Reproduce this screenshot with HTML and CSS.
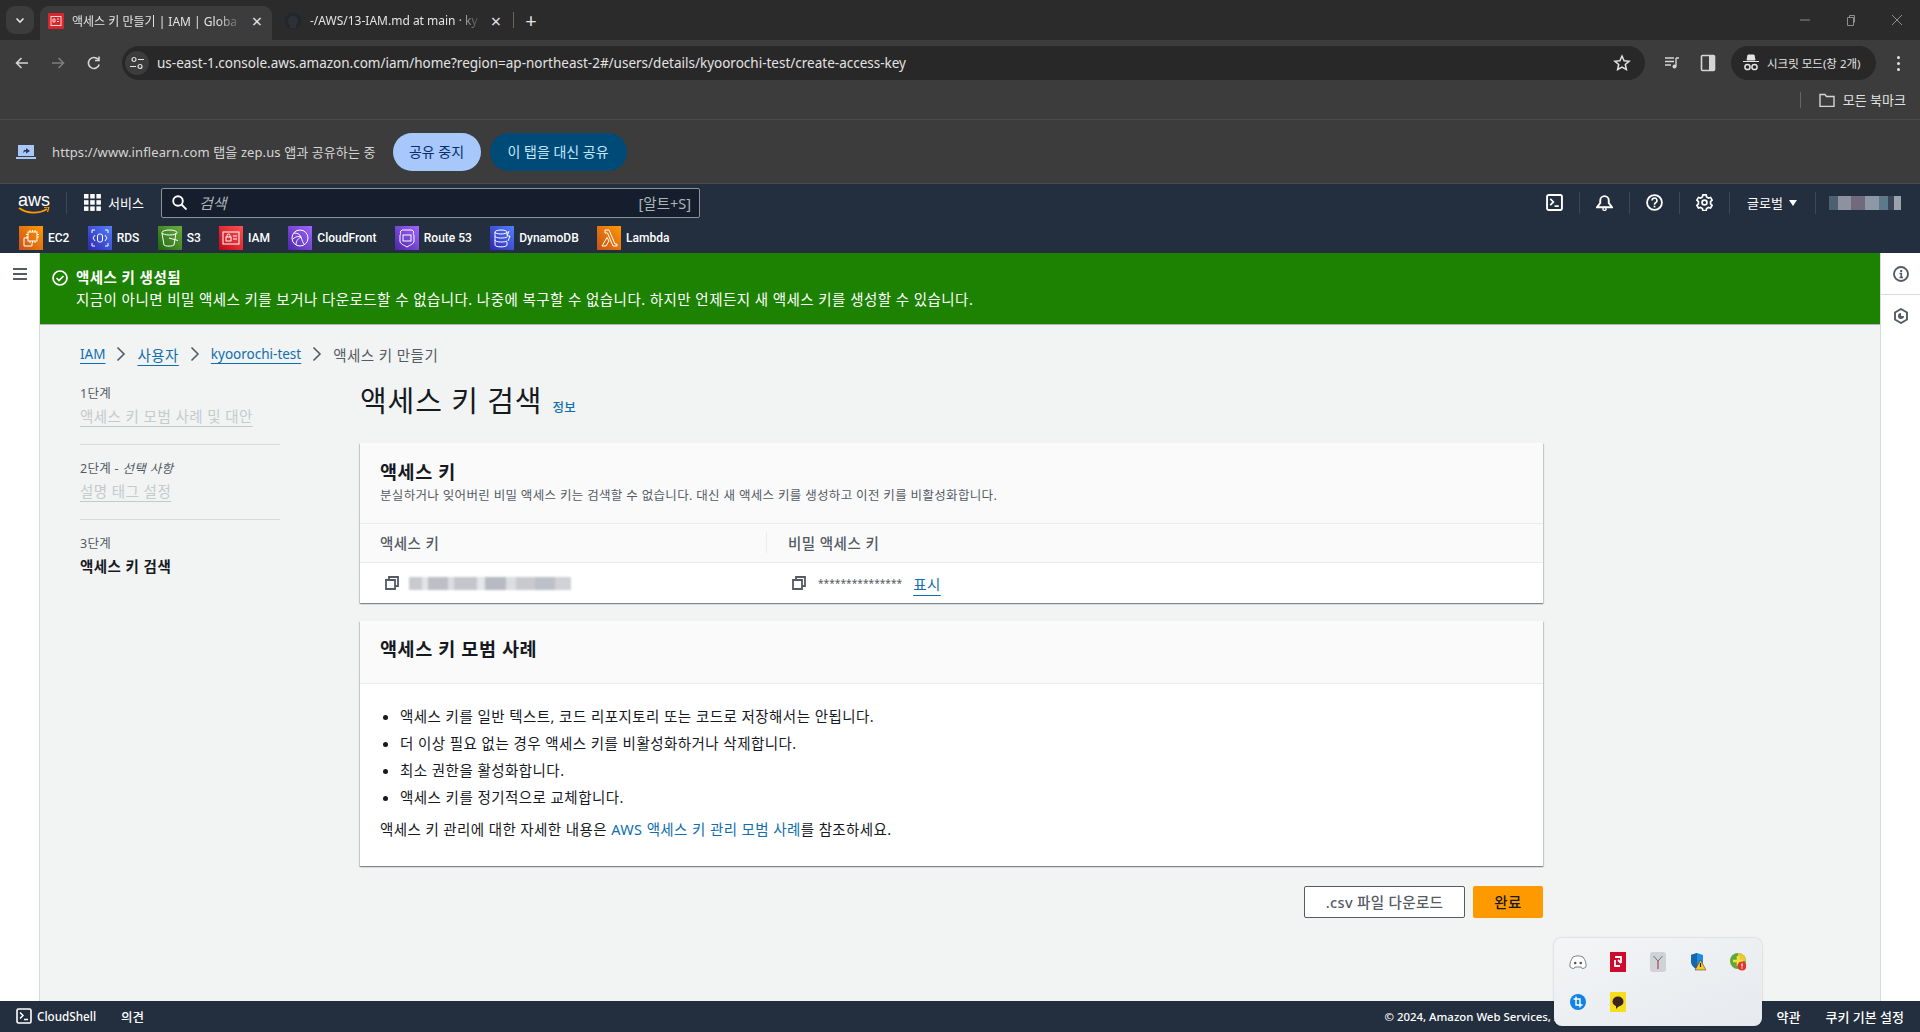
FILE: index.html
```html
<!DOCTYPE html>
<html lang="ko">
<head>
    <meta charset="UTF-8">
    <meta name="viewport" content="width=device-width, initial-scale=1.0">
    <title>액세스 키 만들기 | IAM | Global</title>
    <link rel="stylesheet" href="styles.css">
</head>
<body>
    <div class="browser">
        <div class="tab-strip">
            <div class="tab-search"><svg width="12" height="12" viewBox="0 0 12 12"><path d="M2.500 4.500 6 8l3.500-3.500" fill="none" stroke="#e3e3e3" stroke-width="1.600"/></svg></div>
            <div class="tab tab-active">
                <svg class="favicon" width="16" height="16" viewBox="0 0 16 16"><rect width="16" height="16" rx="1" fill="#d6262d"/><rect x="3" y="3.500" width="10" height="9" fill="none" stroke="#f8d5d5"/><path d="M5 6h2v3H5zM9 6h2M9 8.500h2" fill="none" stroke="#f8d5d5"/></svg>
                <span class="tab-title">액세스 키 만들기 | IAM | Globa</span>
                <span class="tab-close">×</span>
            </div>
            <div class="tab tab-other">
                <svg class="favicon" width="18" height="18" viewBox="0 0 18 18"><circle cx="9" cy="9" r="8.500" fill="#23272c"/><path d="M6 16v-3c-1-1-2-2-2-4 0-3 2-5 5-5s5 2 5 5c0 2-1 3-2 4v3" fill="#2d3137"/></svg>
                <span class="tab-title">-/AWS/13-IAM.md at main · ky</span>
                <span class="tab-close">×</span>
            </div>
            <div class="tab-sep"></div>
            <div class="tab-new">+</div>
            <div class="window-btns">
                <svg width="12" height="12" viewBox="0 0 12 12"><path d="M1 6h10" stroke="#8d8d8d"/></svg>
                <svg width="12" height="12" viewBox="0 0 12 12"><path d="M2.500 3.500h6v8h-6zM4.500 3.500v-2h5v7" fill="none" stroke="#8d8d8d"/></svg>
                <svg width="12" height="12" viewBox="0 0 12 12"><path d="m1 1 10 10M11 1 1 11" stroke="#8d8d8d"/></svg>
            </div>
        </div>
        <div class="toolbar">
            <div class="tool-btn"><svg width="16" height="16" viewBox="0 0 16 16"><path d="M14 8H3M7.500 3 2.500 8l5 5" fill="none" stroke="#d5d5d5" stroke-width="1.600"/></svg></div>
            <div class="tool-btn"><svg width="16" height="16" viewBox="0 0 16 16"><path d="M2 8h11M8.500 3l5 5-5 5" fill="none" stroke="#7d7d7d" stroke-width="1.600"/></svg></div>
            <div class="tool-btn"><svg width="16" height="16" viewBox="0 0 16 16"><path d="M13.200 9.500A5.500 5.500 0 1 1 12 4.300M13 1.500V5.500H9" fill="none" stroke="#d5d5d5" stroke-width="1.600"/></svg></div>
            <div class="omnibox">
                <div class="site-info"><svg width="14" height="14" viewBox="0 0 14 14"><circle cx="4" cy="3.500" r="2" fill="none" stroke="#e3e3e3" stroke-width="1.200"/><path d="M8 3.500h6M0 10.500h6" stroke="#e3e3e3" stroke-width="1.200"/><circle cx="10" cy="10.500" r="2" fill="none" stroke="#e3e3e3" stroke-width="1.200"/></svg></div>
                <span class="url">us-east-1.console.aws.amazon.com/iam/home?region=ap-northeast-2#/users/details/kyoorochi-test/create-access-key</span>
                <svg class="star" width="18" height="18" viewBox="0 0 18 18"><path d="m9 2 2.100 4.700 5 .5-3.800 3.300 1.100 5L9 13l-4.400 2.500 1.100-5L1.900 7.200l5-.5z" fill="none" stroke="#e3e3e3" stroke-width="1.500"/></svg>
            </div>
            <div class="tool-btn"><svg width="16" height="16" viewBox="0 0 16 16"><path d="M1 3h9M1 6.500h9M1 10h6" stroke="#d5d5d5" stroke-width="1.400"/><path d="M12 3h3M12 3v8" stroke="#d5d5d5" stroke-width="1.400" fill="none"/><circle cx="10.500" cy="11.500" r="2" fill="#d5d5d5"/></svg></div>
            <div class="tool-btn"><svg width="16" height="18" viewBox="0 0 16 18"><rect x="1.500" y="1.500" width="13" height="15" rx="1" fill="none" stroke="#d5d5d5" stroke-width="1.600"/><rect x="9" y="2" width="5" height="14" fill="#d5d5d5"/></svg></div>
            <div class="incognito">
                <svg width="16" height="18" viewBox="0 0 16 18"><path d="M5 1h6l1 5H4zM0 7.500h16" fill="#e3e3e3" stroke="#e3e3e3"/><circle cx="4.500" cy="13" r="2.600" fill="none" stroke="#e3e3e3" stroke-width="1.500"/><circle cx="11.500" cy="13" r="2.600" fill="none" stroke="#e3e3e3" stroke-width="1.500"/></svg>
                <span>시크릿 모드(창 2개)</span>
            </div>
            <div class="menu-dots"><i></i><i></i><i></i></div>
        </div>
        <div class="bookmarks">
            <div class="bm-sep"></div>
            <svg width="16" height="14" viewBox="0 0 16 14"><path d="M1 1.500h5l1.500 2H15v10H1z" fill="none" stroke="#d5d5d5" stroke-width="1.400"/></svg>
            <span>모든 북마크</span>
        </div>
        <div class="infobar">
            <svg width="20" height="14" viewBox="0 0 20 14"><path d="M2 0h16v11H2z" fill="#a8c7fa"/><path d="M0 12h20v2H0z" fill="#a8c7fa"/><path d="m7 8 1-3h2V3l4 3-4 2.500V6.500H9z" fill="#2b3a55"/></svg>
            <span class="info-text">https://www.inflearn.com 탭을 zep.us 앱과 공유하는 중</span>
            <div class="btn-stop">공유 중지</div>
            <div class="btn-share">이 탭을 대신 공유</div>
        </div>
    </div>

    <header class="aws-nav">
        <div class="nav-top">
            <div class="aws-logo">
                <span>aws</span>
                <svg width="32" height="8" viewBox="0 0 32 8"><path d="M1 1c8 6 20 6 28 1" fill="none" stroke="#f90" stroke-width="1.800"/><path d="m26 .5 5-.5-1.500 5" fill="none" stroke="#f90" stroke-width="1.200"/></svg>
            </div>
            <div class="logo-sep"></div>
            <div class="services">
                <svg width="17" height="17" viewBox="0 0 17 17" fill="#fff"><rect width="4.500" height="4.500"/><rect x="6.200" width="4.500" height="4.500"/><rect x="12.400" width="4.500" height="4.500"/><rect y="6.200" width="4.500" height="4.500"/><rect x="6.200" y="6.200" width="4.500" height="4.500"/><rect x="12.400" y="6.200" width="4.500" height="4.500"/><rect y="12.400" width="4.500" height="4.500"/><rect x="6.200" y="12.400" width="4.500" height="4.500"/><rect x="12.400" y="12.400" width="4.500" height="4.500"/></svg>
                <span>서비스</span>
            </div>
            <div class="search">
                <svg width="15" height="15" viewBox="0 0 15 15"><circle cx="6" cy="6" r="4.800" fill="none" stroke="#fff" stroke-width="1.900"/><path d="m9.500 9.500 5 5" stroke="#fff" stroke-width="1.900"/></svg>
                <span class="search-ph">검색</span>
                <span class="search-key">[알트+S]</span>
            </div>
            <div class="nav-tools">
                <div class="nav-tool"><svg width="17" height="17" viewBox="0 0 16 16"><rect x="1" y="1" width="14" height="14" rx="1.500" fill="none" stroke="#fff" stroke-width="1.800"/><path d="m4 4.500 3 3-3 3M8 11.500h4" fill="none" stroke="#fff" stroke-width="1.600"/></svg></div>
                <div class="nav-tool"><svg width="17" height="17" viewBox="0 0 16 16"><path d="M1 12.500h14L12 8.500V6A4 4 0 0 0 4 6v2.500z" fill="none" stroke="#fff" stroke-width="1.800"/><circle cx="8" cy="14" r="1.500" fill="none" stroke="#fff" stroke-width="1.300"/></svg></div>
                <div class="nav-tool"><svg width="17" height="17" viewBox="0 0 16 16"><circle cx="8" cy="8" r="7" fill="none" stroke="#fff" stroke-width="1.700"/><path d="M5.700 6.200A2.300 2.300 0 1 1 9 8.200c-.7.400-1 .8-1 1.800" fill="none" stroke="#fff" stroke-width="1.500"/><rect x="7.200" y="11" width="1.600" height="1.600" fill="#fff"/></svg></div>
                <div class="nav-tool"><svg width="17" height="17" viewBox="0 0 16 16"><path d="m6.500.8h3l.5 2 1.700 1 2-.6 1.500 2.600-1.500 1.400v2l1.500 1.400-1.500 2.600-2-.6-1.700 1-.5 2h-3l-.5-2-1.700-1-2 .6L.8 10.600l1.500-1.400v-2L.8 5.800l1.500-2.600 2 .6 1.700-1z" fill="none" stroke="#fff" stroke-width="1.600"/><circle cx="8" cy="8" r="2.300" fill="none" stroke="#fff" stroke-width="1.600"/></svg></div>
                <div class="nav-region"><span>글로벌</span><i class="caret"></i></div>
                <div class="nav-account"><div class="account-blur"></div></div>
            </div>
        </div>
        <div class="favorites">
            <div class="fav">
                <svg width="24" height="24" viewBox="0 0 24 24"><rect width="24" height="24" fill="url(#g-orange)"/><g fill="none" stroke="#fff"><rect x="9" y="6" width="9" height="9"/><path d="M11 4v2M13.500 4v2M16 4v2M11 15v2M13.500 15v2M16 15v2M7 8.500h2M7 11h2M18 8.500h2M18 11h2"/><path d="M9 12H5v8h8v-3"/></g></svg>
                <span>EC2</span>
            </div>
            <div class="fav">
                <svg width="24" height="24" viewBox="0 0 24 24"><rect width="24" height="24" fill="url(#g-blue)"/><g fill="none" stroke="#fff"><rect x="9.500" y="8" width="5" height="8" rx="2"/><path d="M7 9 5 12l2 3M17 9l2 3-2 3M4 7V4h3M17 4h3v3M20 17v3h-3M7 20H4v-3"/></g></svg>
                <span>RDS</span>
            </div>
            <div class="fav">
                <svg width="24" height="24" viewBox="0 0 24 24"><rect width="24" height="24" fill="url(#g-green)"/><g fill="none" stroke="#fff"><ellipse cx="11.500" cy="6.500" rx="7.500" ry="2.500"/><path d="M4 7l2 12c1 1.500 9 1.500 10 0l2-12M11 12l9 2.500"/></g></svg>
                <span>S3</span>
            </div>
            <div class="fav">
                <svg width="24" height="24" viewBox="0 0 24 24"><rect width="24" height="24" fill="url(#g-red)"/><g fill="none" stroke="#fff"><rect x="4" y="6" width="16" height="12"/><rect x="7" y="11" width="5" height="4"/><path d="M8 11V9.500a1.500 1.500 0 0 1 3 0V11M14 10h4M14 13h4"/></g></svg>
                <span>IAM</span>
            </div>
            <div class="fav">
                <svg width="24" height="24" viewBox="0 0 24 24"><rect width="24" height="24" fill="url(#g-purple)"/><g fill="none" stroke="#fff"><circle cx="12" cy="12" r="8"/><path d="M6 7c3 0 6 1 7 4s2 6 3 7M5 13c3-3 7-3 8-2M8 19c0-3 1-6 5-8"/></g></svg>
                <span>CloudFront</span>
            </div>
            <div class="fav">
                <svg width="24" height="24" viewBox="0 0 24 24"><rect width="24" height="24" fill="url(#g-purple)"/><g fill="none" stroke="#fff"><path d="M7 4h10l2 2c-1 1-1 2 0 3v6c0 3-4 4-7 6-3-2-7-3-7-6V9c1-1 1-2 0-3z"/><rect x="8" y="9" width="8" height="6"/></g></svg>
                <span>Route 53</span>
            </div>
            <div class="fav">
                <svg width="24" height="24" viewBox="0 0 24 24"><rect width="24" height="24" fill="url(#g-blue)"/><g fill="none" stroke="#fff"><ellipse cx="11" cy="6" rx="6" ry="2"/><path d="M5 6v13c0 2.500 12 2.500 12 0v-3M5 10c0 2.500 10 2.500 12 1M5 14c0 2.500 10 2.500 12 1M17 6v3M19 5l-2 5h3l-2 5"/></g></svg>
                <span>DynamoDB</span>
            </div>
            <div class="fav">
                <svg width="24" height="24" viewBox="0 0 24 24"><rect width="24" height="24" fill="url(#g-orange)"/><path d="M8 4h4l6 14h2v2h-4L10.500 7H8zM10 11.500 12 15l-3 5H5z" fill="none" stroke="#fff"/></svg>
                <span>Lambda</span>
            </div>
        </div>
    </header>

    <svg class="defs" width="0" height="0">
        <defs>
            <linearGradient id="g-orange" x1="0" y1="1" x2="1" y2="0"><stop offset="0" stop-color="#c8511b"/><stop offset="1" stop-color="#f90"/></linearGradient>
            <linearGradient id="g-blue" x1="0" y1="1" x2="1" y2="0"><stop offset="0" stop-color="#2e27ad"/><stop offset="1" stop-color="#527fff"/></linearGradient>
            <linearGradient id="g-green" x1="0" y1="1" x2="1" y2="0"><stop offset="0" stop-color="#1b660f"/><stop offset="1" stop-color="#6cae3e"/></linearGradient>
            <linearGradient id="g-red" x1="0" y1="1" x2="1" y2="0"><stop offset="0" stop-color="#bd0816"/><stop offset="1" stop-color="#ff5252"/></linearGradient>
            <linearGradient id="g-purple" x1="0" y1="1" x2="1" y2="0"><stop offset="0" stop-color="#4d27a8"/><stop offset="1" stop-color="#a166ff"/></linearGradient>
        </defs>
    </svg>

    <div class="console">
        <aside class="rail-left">
            <svg width="16" height="14" viewBox="0 0 16 14"><path d="M1 2h14M1 7h14M1 12h14" stroke="#545b64" stroke-width="2"/></svg>
        </aside>
        <main class="center">
            <div class="flash">
                <svg width="16" height="16" viewBox="0 0 16 16"><circle cx="8" cy="8" r="7" fill="none" stroke="#fff" stroke-width="1.700"/><path d="m4.500 8 2.500 2.500L11.500 6" fill="none" stroke="#fff" stroke-width="1.700"/></svg>
                <div>
                    <div class="flash-title">액세스 키 생성됨</div>
                    <div class="flash-text">지금이 아니면 비밀 액세스 키를 보거나 다운로드할 수 없습니다. 나중에 복구할 수 없습니다. 하지만 언제든지 새 액세스 키를 생성할 수 있습니다.</div>
                </div>
            </div>
            <div class="page">
                <nav class="crumbs">
                    <a class="latin" href="#">IAM</a>
                    <svg width="10" height="16" viewBox="0 0 10 16"><path d="m1.500 1.500 6.500 6.500-6.500 6.500" fill="none" stroke="#545b64" stroke-width="1.600"/></svg>
                    <a href="#">사용자</a>
                    <svg width="10" height="16" viewBox="0 0 10 16"><path d="m1.500 1.500 6.500 6.500-6.500 6.500" fill="none" stroke="#545b64" stroke-width="1.600"/></svg>
                    <a class="latin" href="#">kyoorochi-test</a>
                    <svg width="10" height="16" viewBox="0 0 10 16"><path d="m1.500 1.500 6.500 6.500-6.500 6.500" fill="none" stroke="#545b64" stroke-width="1.600"/></svg>
                    <span>액세스 키 만들기</span>
                </nav>
                <div class="wizard">
                    <ol class="steps">
                        <li class="step">
                            <div class="step-num">1단계</div>
                            <a class="step-link" href="#">액세스 키 모범 사례 및 대안</a>
                        </li>
                        <li class="step">
                            <div class="step-num">2단계 - <em>선택 사항</em></div>
                            <a class="step-link" href="#">설명 태그 설정</a>
                        </li>
                        <li class="step step-current">
                            <div class="step-num">3단계</div>
                            <div class="step-now">액세스 키 검색</div>
                        </li>
                    </ol>
                    <div class="content">
                        <div class="title-row">
                            <h1>액세스 키 검색</h1>
                            <a href="#">정보</a>
                        </div>
                        <section class="card card-keys">
                            <div class="card-head head-keys">
                                <h2>액세스 키</h2>
                                <p>분실하거나 잊어버린 비밀 액세스 키는 검색할 수 없습니다. 대신 새 액세스 키를 생성하고 이전 키를 비활성화합니다.</p>
                            </div>
                            <div class="key-head">
                                <div class="key-col">액세스 키</div>
                                <div class="key-col key-col-2"><span>비밀 액세스 키</span></div>
                            </div>
                            <div class="key-row">
                                <div class="key-col key-val">
                                    <svg class="copy" width="14" height="14" viewBox="0 0 14 14"><path d="M1 4h9v9H1zM4 4V1h9v9h-3" fill="none" stroke="#545b64" stroke-width="1.800"/></svg>
                                    <div class="key-blur"></div>
                                </div>
                                <div class="key-col key-col-2 key-val">
                                    <svg class="copy" width="14" height="14" viewBox="0 0 14 14"><path d="M1 4h9v9H1zM4 4V1h9v9h-3" fill="none" stroke="#545b64" stroke-width="1.800"/></svg>
                                    <span class="stars">***************</span>
                                    <a href="#">표시</a>
                                </div>
                            </div>
                        </section>
                        <section class="card card-best">
                            <div class="card-head head-best">
                                <h2>액세스 키 모범 사례</h2>
                            </div>
                            <div class="card-body">
                                <ul>
                                    <li>액세스 키를 일반 텍스트, 코드 리포지토리 또는 코드로 저장해서는 안됩니다.</li>
                                    <li>더 이상 필요 없는 경우 액세스 키를 비활성화하거나 삭제합니다.</li>
                                    <li>최소 권한을 활성화합니다.</li>
                                    <li>액세스 키를 정기적으로 교체합니다.</li>
                                </ul>
                                <p>액세스 키 관리에 대한 자세한 내용은 <a href="#">AWS 액세스 키 관리 모범 사례</a>를 참조하세요.</p>
                            </div>
                        </section>
                        <div class="actions">
                            <button class="btn-csv">.csv 파일 다운로드</button>
                            <button class="btn-done">완료</button>
                        </div>
                    </div>
                </div>
            </div>
        </main>
        <aside class="rail-right">
            <div class="rail-item rail-item-top"><svg width="16" height="16" viewBox="0 0 16 16"><circle cx="8" cy="8" r="7" fill="none" stroke="#545b64" stroke-width="1.900"/><path d="M6.500 7.500H8.300V11.500M6.500 11.500h3.500" fill="none" stroke="#545b64" stroke-width="1.600"/><rect x="7.200" y="4" width="2" height="2" fill="#545b64"/></svg></div>
            <div class="rail-item"><svg width="14" height="16" viewBox="0 0 14 16"><path d="M7 1l6 3.500v7L7 15l-6-3.500v-7z" fill="none" stroke="#545b64" stroke-width="1.900"/><path d="M7 5a3 3 0 1 0 3 3H7z" fill="#545b64"/></svg></div>
        </aside>
    </div>

    <footer class="aws-foot">
        <svg width="16" height="16" viewBox="0 0 16 16"><rect x="1" y="1" width="14" height="14" rx="1.500" fill="none" stroke="#fff" stroke-width="1.600"/><path d="m4 4.500 3 3-3 3M8 11.500h4" fill="none" stroke="#fff" stroke-width="1.500"/></svg>
        <span class="foot-shell">CloudShell</span>
        <span class="foot-fb">의견</span>
        <span class="foot-copy">© 2024, Amazon Web Services, Inc. 또는 계열사.</span>
        <span class="foot-terms">약관</span>
        <span class="foot-cookie">쿠키 기본 설정</span>
    </footer>

    <div class="tray">
        <svg width="18" height="14" viewBox="0 0 18 14"><path d="M4 2c3-1.500 7-1.500 10 0 2 3 3.500 6 3 10-1 1-3 1.500-4 1.500l-1-1.500H6l-1 1.500C4 13.500 2 13 1 12 .5 8 2 5 4 2z" fill="#fff" stroke="#7d828a"/><circle cx="6.200" cy="8" r="1.300" fill="#555"/><circle cx="11.800" cy="8" r="1.300" fill="#555"/></svg>
        <svg width="16" height="20" viewBox="0 0 16 20"><rect width="16" height="20" fill="#cf0a2c"/><path d="M5 5h6v6M11 11 8 8M5 8v6h5" fill="none" stroke="#fff" stroke-width="1.800"/></svg>
        <svg width="16" height="20" viewBox="0 0 16 20"><rect width="16" height="20" rx="3" fill="#cfd2d6"/><path d="M3.500 4 8 9l4.500-5" fill="none" stroke="#6d7076"/><path d="M8 9v8" stroke="#b0566a" stroke-width="1.400"/></svg>
        <svg width="16" height="20" viewBox="0 0 16 20"><path d="M7 1 1 3v6c0 4 3 7 6 8 3-1 6-4 6-8V3z" fill="#1f8ae0"/><path d="M7 1v16c-3-1-6-4-6-8V3z" fill="#1267ad"/><path d="M10.500 8 16 18H5z" fill="#f9c828" stroke="#333" stroke-width=".5"/><path d="M10.500 11v4" stroke="#222" stroke-width="1.200"/></svg>
        <svg width="16" height="20" viewBox="0 0 16 20"><circle cx="8" cy="9" r="8" fill="#5fa83a"/><path d="M8 1a8 8 0 0 1 8 8H8z" fill="#e9c83a"/><path d="M8 4v10M3 9h10" stroke="#f3e23e" stroke-width="2.600"/><circle cx="12" cy="14" r="4.500" fill="#e5352d"/><path d="M12 11.500v3M12 15.500v1" stroke="#fff" stroke-width="1.300"/></svg>
        <svg width="16" height="20" viewBox="0 0 16 20"><circle cx="8" cy="10" r="8" fill="#1283e6"/><path d="M6 4.500V13h6.500M3.500 7H10v8.500" fill="none" stroke="#fff" stroke-width="1.400"/></svg>
        <svg width="16" height="20" viewBox="0 0 16 20"><rect width="16" height="20" rx="1" fill="#f7de1a"/><ellipse cx="8" cy="9.500" rx="5.500" ry="5" fill="#3a2320"/><path d="M6 13v4l3-3z" fill="#3a2320"/></svg>
    </div>
</body>
</html>
```

FILE: styles.css
```css
* {
    box-sizing: border-box;
}
html, body {
    margin: 0;
    height: 1032px;
    overflow: hidden;
}
body {
    display: flex;
    flex-direction: column;
    font-family: "Noto Sans", "Noto Sans CJK KR", sans-serif;
    font-size: 14px;
    color: #16191f;
    background-color: #f2f3f3;
}
a {
    color: #0f6fae;
}
.defs {
    position: absolute;
}

/* chrome */
.browser {
    color: #e3e3e3;
    background-color: #3c3c3c;
}
.tab-strip {
    display: flex;
    align-items: flex-end;
    height: 40px;
    padding-left: 6px;
    background-color: #2b2b2b;
}
.tab-search {
    display: flex;
    align-items: center;
    justify-content: center;
    width: 28px;
    height: 28px;
    margin: 0 6px 6px 0;
    border-radius: 9px;
    background-color: #3c3c3c;
}
.tab {
    display: flex;
    align-items: center;
    width: 232px;
    height: 34px;
    padding: 0 7px 5px 8px;
    font-size: 12px;
    border-radius: 9px 9px 0 0;
}
.tab-active {
    background-color: #3c3c3c;
}
.tab-other {
    padding: 0 0 5px 12px;
}
.favicon {
    flex: none;
    margin-right: 8px;
}
.tab-title {
    flex: 1;
    overflow: hidden;
    white-space: nowrap;
    -webkit-mask-image: linear-gradient(90deg, #000 85%, transparent);
    mask-image: linear-gradient(90deg, #000 85%, transparent);
}
.tab-close {
    width: 16px;
    margin-left: 6px;
    font-size: 18px;
    line-height: 18px;
    text-align: center;
}
.tab-sep {
    width: 1px;
    height: 16px;
    margin: 0 0 12px 9px;
    background-color: #666;
}
.tab-new {
    width: 34px;
    height: 34px;
    font-size: 20px;
    line-height: 30px;
    text-align: center;
}
.window-btns {
    display: flex;
    gap: 34px;
    margin: 0 17px 14px auto;
}
.toolbar {
    display: flex;
    align-items: center;
    height: 46px;
    padding: 6px 4px;
    border-radius: 9px 9px 0 0;
}
.tool-btn {
    display: flex;
    align-items: center;
    justify-content: center;
    width: 36px;
    height: 34px;
}
.omnibox {
    display: flex;
    flex: 1;
    align-items: center;
    height: 34px;
    margin: 0 9px 0 10px;
    padding: 0 14px 0 3px;
    border-radius: 17px;
    background-color: #282828;
}
.site-info {
    display: flex;
    align-items: center;
    justify-content: center;
    width: 24px;
    height: 24px;
    border-radius: 50%;
    background-color: #3c3c3c;
}
.url {
    flex: 1;
    margin: -1px 0 0 8px;
    font-size: 13.500px;
    white-space: nowrap;
}
.incognito {
    display: flex;
    align-items: center;
    gap: 8px;
    width: 145px;
    height: 34px;
    margin-left: 5px;
    padding-left: 12px;
    font-size: 11.500px;
    border-radius: 17px;
    background-color: #282828;
}
.menu-dots {
    display: flex;
    flex-direction: column;
    align-items: center;
    gap: 3px;
    width: 36px;
    margin-left: 4px;
}
.menu-dots i {
    width: 3px;
    height: 3px;
    border-radius: 50%;
    background-color: #e3e3e3;
}
.bookmarks {
    display: flex;
    align-items: center;
    justify-content: flex-end;
    gap: 8px;
    height: 34px;
    padding: 0 14px 6px 0;
    font-size: 13px;
    border-bottom: 1px solid #4a4a4a;
}
.bm-sep {
    width: 1px;
    height: 16px;
    margin-right: 10px;
    background-color: #666;
}
.infobar {
    display: flex;
    align-items: center;
    height: 64px;
    padding-left: 16px;
    border-bottom: 1px solid #4a4a4a;
}
.info-text {
    margin: 0 17px 0 16px;
    font-size: 13px;
    letter-spacing: 0.1px;
    color: #d5d5d5;
}
.btn-stop, .btn-share {
    height: 38px;
    font-size: 14px;
    line-height: 37px;
    text-align: center;
    border-radius: 19px;
}
.btn-stop {
    width: 88px;
    margin-right: 9px;
    color: #062e6f;
    background-color: #a8c7fa;
}
.btn-share {
    width: 137px;
    color: #c2e7ff;
    background-color: #004a77;
}

/* aws nav */
.aws-nav {
    color: #fff;
    background-color: #232f3e;
}
.nav-top {
    display: flex;
    align-items: center;
    height: 37px;
    padding-left: 18px;
}
.aws-logo {
    position: relative;
    width: 32px;
    height: 24px;
    font-family: "Liberation Sans", sans-serif;
    font-size: 18px;
    line-height: 18px;
}
.aws-logo svg {
    position: absolute;
    left: 0;
    bottom: 0;
}
.logo-sep {
    width: 1px;
    height: 22px;
    margin: 0 17px 0 16px;
    background-color: #414750;
}
.services {
    display: flex;
    align-items: center;
    gap: 7px;
    width: 77px;
    font-size: 13px;
}
.search {
    display: flex;
    align-items: center;
    width: 539px;
    height: 30px;
    padding: 0 8px 0 10px;
    border: 1px solid #879596;
    border-radius: 2px;
    background-color: #161e2d;
}
.search-ph {
    flex: 1;
    margin-left: 12px;
    font-size: 15px;
    font-style: italic;
    color: #aab7b8;
}
.search-key {
    font-size: 14.500px;
    color: #aab7b8;
}
.nav-tools {
    display: flex;
    align-items: center;
    height: 22px;
    margin-left: auto;
}
.nav-tool {
    display: flex;
    align-items: center;
    justify-content: center;
    width: 50px;
    height: 22px;
    border-right: 1px solid #414750;
}
.nav-region {
    display: flex;
    align-items: center;
    gap: 6px;
    width: 86px;
    height: 22px;
    padding-left: 17px;
    font-size: 13px;
    border-right: 1px solid #414750;
}
.caret {
    width: 0;
    height: 0;
    border-left: 4px solid transparent;
    border-right: 4px solid transparent;
    border-top: 6px solid #fff;
}
.nav-account {
    width: 104px;
    padding-left: 13px;
}
.account-blur {
    width: 72px;
    height: 14px;
    background: linear-gradient(90deg, #4d6070 0 12%, #8d929e 12% 30%, #6f6a7c 30% 50%, #8c98a5 50% 70%, #5d7a8a 70% 82%, #3a4555 82% 90%, #9aa2ad 90%);
}
.favorites {
    display: flex;
    align-items: center;
    height: 32px;
    padding: 1px 0 0 19px;
    font-family: Roboto, "Noto Sans CJK KR", sans-serif;
    font-size: 12px;
    font-weight: 500;
}
.fav {
    display: flex;
    align-items: center;
    gap: 5px;
    margin-right: 18.300px;
}
.fav svg {
    display: block;
}

/* console */
.console {
    display: flex;
    flex: 1;
    min-height: 0;
}
.rail-left {
    width: 40px;
    padding: 13px 0 0 12px;
    background-color: #fff;
    border-right: 1px solid #d5dbdb;
}
.rail-right {
    width: 40px;
    background-color: #fff;
    border-left: 1px solid #d5dbdb;
}
.rail-item {
    display: flex;
    align-items: center;
    justify-content: center;
    height: 42px;
}
.rail-item-top {
    border-bottom: 1px solid #d5dbdb;
}
.center {
    flex: 1;
    min-width: 0;
    font-size: 14.500px;
    letter-spacing: 0.45px;
}
.flash {
    display: flex;
    gap: 8px;
    height: 72px;
    padding: 14px 12px 0 12px;
    color: #fff;
    background-color: #1d8102;
    border-bottom: 1px solid #aab7b8;
}
.flash svg {
    flex: none;
    margin-top: 3px;
}
.flash-title {
    font-weight: 700;
    line-height: 20px;
}
.flash-text {
    margin-top: 2px;
    line-height: 20px;
}
.page {
    padding: 18px 0 0 40px;
}
.crumbs {
    display: flex;
    align-items: center;
    gap: 11px;
    height: 22px;
    color: #545b64;
}
.crumbs a {
    text-underline-offset: 4px;
}
.latin {
    font-size: 13.500px;
    letter-spacing: 0;
}
.wizard {
    display: flex;
    margin-top: 5px;
}
.steps {
    width: 200px;
    margin: 0;
    padding: 0;
    list-style: none;
}
.step {
    height: 75px;
    padding-top: 16px;
    border-bottom: 1px solid #d5dbdb;
}
.step-current {
    border-bottom: 0;
}
.step-num {
    font-size: 12.500px;
    letter-spacing: 0.3px;
    line-height: 16px;
    color: #545b64;
}
.step-link {
    display: inline-block;
    margin-top: 3px;
    line-height: 22px;
    color: #c4cbcb;
    text-underline-offset: 4px;
}
.step-now {
    margin-top: 3px;
    font-weight: 700;
    line-height: 22px;
}
.content {
    width: 1183px;
    margin-left: 80px;
}
.title-row {
    display: flex;
    align-items: baseline;
    gap: 10px;
    height: 73px;
    padding-top: 11px;
}
h1 {
    margin: 0;
    font-size: 29px;
    font-weight: 400;
    letter-spacing: 0.9px;
    line-height: 40px;
}
.title-row a {
    font-size: 12.500px;
    font-weight: 500;
    letter-spacing: 0.3px;
    text-decoration: none;
}
.card {
    background-color: #fff;
    box-shadow: 0 1px 1px 0 rgba(0, 28, 36, 0.3), 1px 1px 1px 0 rgba(0, 28, 36, 0.15), -1px 1px 1px 0 rgba(0, 28, 36, 0.15);
}
.card-keys {
    height: 160px;
}
.card-best {
    height: 245px;
    margin-top: 18px;
}
.card-head {
    padding: 16px 20px 0 20px;
    background-color: #fafafa;
    border-bottom: 1px solid #eaeded;
}
.head-keys {
    height: 81px;
    padding-top: 17px;
}
.head-best {
    height: 63px;
}
h2 {
    margin: 0;
    font-size: 18.500px;
    font-weight: 700;
    letter-spacing: 0.6px;
    line-height: 24px;
}
.card-head p {
    margin: 3px 0 0 0;
    font-size: 12.500px;
    letter-spacing: 0.33px;
    line-height: 18px;
    color: #545b64;
}
.key-head, .key-row {
    display: flex;
    height: 39px;
}
.key-head {
    align-items: center;
    font-weight: 500;
    color: #545b64;
    background-color: #fafafa;
    border-bottom: 1px solid #eaeded;
}
.key-head .key-col {
    margin-top: -2px;
}
.key-col {
    width: 406px;
    padding-left: 20px;
}
.key-col-2 {
    width: auto;
    padding-left: 0;
}
.key-head .key-col-2 {
    padding-left: 21px;
    border-left: 1px solid #eaeded;
}
.key-val {
    display: flex;
    align-items: center;
}
.key-row {
    padding-top: 1px;
}
.key-row .key-col-2 {
    margin-left: 21px;
}
.copy {
    margin-left: 5px;
}
.key-blur {
    width: 162px;
    height: 13px;
    margin-left: 10px;
    filter: blur(1px);
    background: linear-gradient(90deg, #c8cace 0 8%, #e3e4e7 8% 12%, #bcbfc6 12% 24%, #dcdde0 24% 28%, #c4c6cb 28% 42%, #e5e6e8 42% 47%, #b7bac2 47% 60%, #dcdde0 60% 66%, #c8cace 66% 78%, #bcc0c8 78% 90%, #d0d2d6 90%);
}
.stars {
    margin-left: 12px;
    font-size: 10.200px;
    letter-spacing: 0;
    color: #545b64;
}
.key-val a {
    margin-left: 11px;
    text-underline-offset: 5px;
}
.card-body {
    padding: 21px 20px 0 20px;
}
.card-body ul {
    margin: 0;
    padding: 0 0 0 20px;
}
.card-body li {
    height: 27px;
    line-height: 22px;
}
.card-body p {
    margin: 5px 0 0 0;
    letter-spacing: 0.4px;
    line-height: 22px;
}
.card-body a {
    text-decoration: none;
}
.actions {
    display: flex;
    justify-content: flex-end;
    gap: 8px;
    margin-top: 20px;
}
.actions button {
    height: 32px;
    padding-bottom: 3px;
    font-family: inherit;
    font-size: 14.500px;
    font-weight: 500;
    letter-spacing: 0.35px;
    border-radius: 2px;
}
.btn-csv {
    width: 161px;
    color: #545b64;
    background-color: #fff;
    border: 1px solid #545b64;
}
.btn-done {
    width: 70px;
    color: #16191f;
    background-color: #f90;
    border: 0;
}

/* footer */
.aws-foot {
    display: flex;
    align-items: center;
    height: 31px;
    padding: 0 0 1px 16px;
    font-size: 12px;
    font-weight: 500;
    color: #fff;
    background-color: #232f3e;
}
.foot-shell {
    margin-left: 5px;
    font-size: 11.700px;
}
.foot-fb {
    margin-left: 25px;
    font-size: 12.500px;
}
.foot-copy {
    margin-left: auto;
    width: 392px;
    font-size: 11.400px;
    white-space: nowrap;
}
.foot-terms {
    margin-right: 25px;
    font-size: 13px;
}
.foot-cookie {
    margin-right: 16px;
    font-size: 13px;
}

/* system tray flyout */
.tray {
    position: absolute;
    left: 1554px;
    top: 938px;
    display: grid;
    grid-template-columns: repeat(5, 40px);
    grid-auto-rows: 40px;
    align-items: center;
    justify-items: center;
    width: 208px;
    height: 88px;
    padding: 4px;
    border-radius: 8px;
    background: linear-gradient(160deg, #f3f5f6, #e6e9ee);
    box-shadow: 0 0 2px rgba(0, 0, 0, 0.25);
}
```
